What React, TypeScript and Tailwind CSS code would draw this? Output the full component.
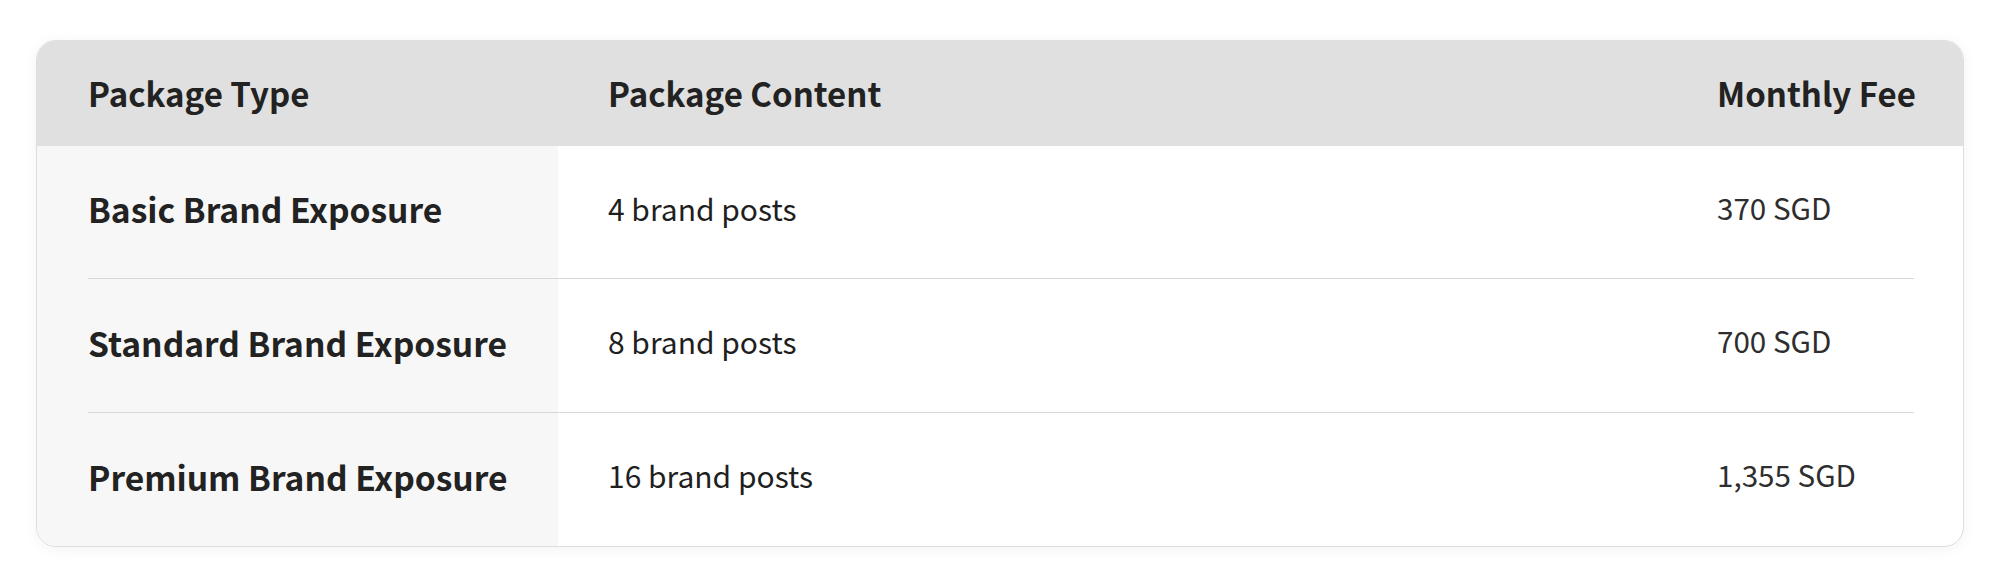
import React from "react";

const rows = [
  { type: "Basic Brand Exposure", content: "4 brand posts", fee: "370 SGD" },
  { type: "Standard Brand Exposure", content: "8 brand posts", fee: "700 SGD" },
  { type: "Premium Brand Exposure", content: "16 brand posts", fee: "1,355 SGD" },
];

export default function App() {
  return (
    <div
      className="w-[2000px] h-[581px] bg-white pt-[40px] px-[36px] text-[#222222]"
      style={{ fontFamily: '"Noto Sans CJK SC", "Noto Sans", sans-serif' }}
    >
      <div className="rounded-[20px] border border-[#dedede] overflow-hidden bg-white shadow-[0_2px_14px_rgba(0,0,0,0.05)]">
        <div className="flex h-[105px] bg-[#e0e0e0] items-center">
          <div className="w-[521px] shrink-0 pl-[51px] text-[33px] font-bold">Package Type</div>
          <div className="flex-1 pl-[50px] text-[33px] font-bold">Package Content</div>
          <div className="w-[246px] shrink-0 text-[33px] font-bold">Monthly Fee</div>
        </div>
        {rows.map((r, i) => {
          const last = i === rows.length - 1;
          const b = last ? "" : "border-b border-[#d8d8d8]";
          return (
            <div key={r.type} className={`flex ${i === 1 ? "h-[134px]" : "h-[133px]"}`}>
              <div className="w-[521px] shrink-0 bg-[#f7f7f7] pl-[51px]">
                <div className={`h-full flex items-center pb-[5px] text-[33.6px] font-bold ${b}`}>{r.type}</div>
              </div>
              <div className="flex-1">
                <div className={`h-full flex items-center pl-[50px] pb-[8px] text-[30px] font-normal text-[#1f1f1f] ${b}`}>{r.content}</div>
              </div>
              <div className="w-[246px] shrink-0 pr-[49px]">
                <div className={`h-full flex items-center pb-[8px] text-[29.6px] font-normal text-[#2e2e2e] ${b}`}>{r.fee}</div>
              </div>
            </div>
          );
        })}
      </div>
    </div>
  );
}
